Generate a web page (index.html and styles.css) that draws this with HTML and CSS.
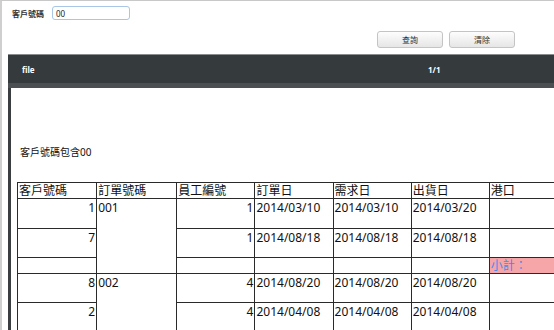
FILE: index.html
```html
<!DOCTYPE html>
<html lang="zh-Hant">
<head>
  <meta charset="UTF-8" />
  <meta name="viewport" content="width=device-width, initial-scale=1.0" />
  <title>訂單查詢</title>
  <link rel="stylesheet" href="styles.css">
</head>
<body>
  <div class="page">

    <div class="search">
      <label for="custNo">客戶號碼</label>
      <input id="custNo" type="text" value="00">
    </div>

    <div class="actions">
      <button>查詢</button>
      <button>清除</button>
    </div>

    <div class="viewer">
      <div class="toolbar">
        <span class="file">file</span>
        <span class="pages">1/1</span>
      </div>

      <div class="report">
        <h2>客戶號碼包含00</h2>
        <table>
          <colgroup>
            <col class="c-cust">
            <col class="c-order">
            <col class="c-emp">
            <col class="c-date">
            <col class="c-date">
            <col class="c-date">
            <col class="c-port">
          </colgroup>
          <tr class="head">
            <td>客戶號碼</td>
            <td>訂單號碼</td>
            <td>員工編號</td>
            <td>訂單日</td>
            <td>需求日</td>
            <td>出貨日</td>
            <td>港口</td>
          </tr>
          <tr class="row first">
            <td class="num">1</td>
            <td rowspan="3">001</td>
            <td class="num">1</td>
            <td>2014/03/10</td>
            <td>2014/03/10</td>
            <td>2014/03/20</td>
            <td></td>
          </tr>
          <tr class="row">
            <td class="num">7</td>
            <td class="num">1</td>
            <td>2014/08/18</td>
            <td>2014/08/18</td>
            <td>2014/08/18</td>
            <td></td>
          </tr>
          <tr class="subtotal">
            <td></td>
            <td></td>
            <td></td>
            <td></td>
            <td></td>
            <td class="label">小計：</td>
          </tr>
          <tr class="row">
            <td class="num">8</td>
            <td rowspan="3">002</td>
            <td class="num">4</td>
            <td>2014/08/20</td>
            <td>2014/08/20</td>
            <td>2014/08/20</td>
            <td></td>
          </tr>
          <tr class="row">
            <td class="num">2</td>
            <td class="num">4</td>
            <td>2014/04/08</td>
            <td>2014/04/08</td>
            <td>2014/04/08</td>
            <td></td>
          </tr>
          <tr class="row">
            <td class="num"></td>
            <td class="num"></td>
            <td></td>
            <td></td>
            <td></td>
            <td></td>
          </tr>
        </table>
      </div>
    </div>

  </div>
</body>
</html>
```

FILE: styles.css
```css
body {
  margin: 0;
  padding: 0;
  background: white;
  color: #222;
  font-family: "Noto Sans", "Noto Sans CJK TC", sans-serif;
  overflow: hidden;
  height: 330px;
}

.page {
  border-top: 1px solid #c8c8c8;
  border-left: 2px solid #cfcfcf;
  height: 100%;
  width: 780px;
}

.search {
  display: flex;
  align-items: center;
  gap: 8px;
  padding: 5px 0 0 10px;
  height: 14px;
}

.search label {
  font-size: 8px;
  font-weight: bold;
  color: #333;
}

.search input {
  box-sizing: border-box;
  width: 78px;
  height: 14px;
  padding: 0 3px;
  border: 1px solid #a9c6e6;
  border-radius: 3px;
  font-family: inherit;
  font-size: 8px;
  color: #222;
  outline: none;
}

.actions {
  display: flex;
  gap: 6px;
  padding-left: 375px;
  margin-top: 11px;
}

.actions button {
  box-sizing: border-box;
  width: 66px;
  height: 17px;
  padding: 0;
  border: 1px solid #c4c4c4;
  border-radius: 3px;
  background: linear-gradient(#fdfdfd, #e6e6e6);
  font-family: inherit;
  font-size: 8px;
  color: #333;
}

.viewer {
  margin-top: 6px;
  margin-left: 6px;
}

.toolbar {
  display: flex;
  align-items: center;
  height: 28px;
  border-top: 1px solid #8a8d90;
  border-bottom: 5px solid #4b4f52;
  background: #353a3d;
  color: white;
  font-size: 8px;
  font-weight: bold;
}

.toolbar .file {
  width: 406px;
  padding-left: 14px;
}

.report {
  border-left: 3px solid #3a3e41;
  padding: 57px 0 0 6px;
  height: 300px;
}

.report h2 {
  margin: 0 0 23px 3px;
  font-size: 10px;
  font-weight: normal;
  line-height: 14px;
  color: #111;
}

table {
  width: 552px;
  border-collapse: collapse;
  table-layout: fixed;
  font-size: 12px;
  color: #111;
}

.c-cust { width: 79px; }
.c-order { width: 80px; }
.c-emp { width: 78px; }
.c-date { width: 78px; }
.c-port { width: 79px; }

td {
  border: 1px solid #2a2a2a;
  padding: 0 1px;
  vertical-align: top;
  line-height: 15px;
  white-space: nowrap;
  overflow: hidden;
}

.head td {
  height: 14px;
}

.row td {
  height: 27px;
  padding-top: 1px;
}

.row.first td {
  height: 28px;
}

.subtotal td {
  height: 15px;
}

td.num {
  text-align: right;
}

td.label {
  background: #f6a5a8;
  color: #3f8ee8;
}
```
